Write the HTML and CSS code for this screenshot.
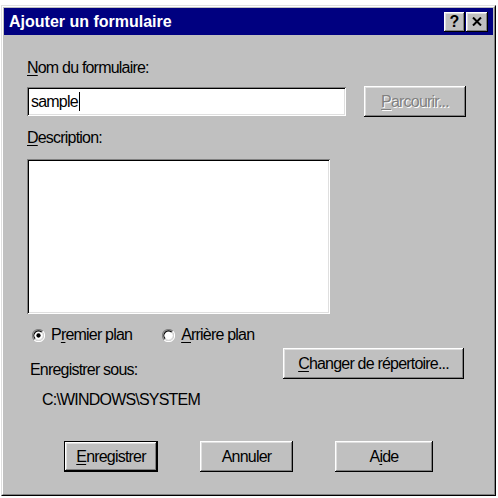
FILE: index.html
```html
<!DOCTYPE html>
<html lang="fr">
  <head>
    <meta charset="UTF-8" />
    <title>Ajouter un formulaire</title>
    <link rel="stylesheet" href="styles.css">
  </head>
  <body>
    <div class="window">
      <div class="frame">
        <!-- Title bar -->
        <div class="titlebar">
          <span class="title">Ajouter un formulaire</span>
          <div class="title-buttons">
            <span class="tbtn help">?</span>
            <span class="tbtn close">
              <svg width="10" height="9" viewBox="0 0 10 9">
                <path d="M1 0.5 L9 8.5 M9 0.5 L1 8.5" stroke="#000" stroke-width="2" fill="none" />
              </svg>
            </span>
          </div>
        </div>

        <div class="body">
          <div class="label first"><u>N</u>om du formulaire:</div>
          <div class="name-row">
            <div class="field name-field">sample<span class="caret"></span></div>
            <div class="btn browse disabled"><u>P</u>arcourir...</div>
          </div>

          <div class="label"><u>D</u>escription:</div>
          <div class="field memo"></div>

          <div class="lower">
            <div class="lower-left">
              <div class="radios">
                <div class="radio first-radio">
                  <svg class="radio-icon" width="13" height="13" viewBox="0 0 12 12">
                    <path d="M10 2 A5.5 5.5 0 0 0 2 10" stroke="#808080" stroke-width="1" fill="none" />
                    <path d="M2 10 A5.5 5.5 0 0 0 10 2" stroke="#fff" stroke-width="1" fill="none" />
                    <circle cx="6" cy="6" r="4.2" fill="#fff" />
                    <path d="M9 3 A4.2 4.2 0 0 0 3 9" stroke="#000" stroke-width="1" fill="none" />
                    <path d="M3 9 A4.2 4.2 0 0 0 9 3" stroke="#dfdfdf" stroke-width="1" fill="none" />
                    <circle cx="6" cy="6" r="2" fill="#000" />
                  </svg>
                  <span>P<u>r</u>emier plan</span>
                </div>
                <div class="radio">
                  <svg class="radio-icon" width="13" height="13" viewBox="0 0 12 12">
                    <path d="M10 2 A5.5 5.5 0 0 0 2 10" stroke="#808080" stroke-width="1" fill="none" />
                    <path d="M2 10 A5.5 5.5 0 0 0 10 2" stroke="#fff" stroke-width="1" fill="none" />
                    <circle cx="6" cy="6" r="4.2" fill="#fff" />
                    <path d="M9 3 A4.2 4.2 0 0 0 3 9" stroke="#000" stroke-width="1" fill="none" />
                    <path d="M3 9 A4.2 4.2 0 0 0 9 3" stroke="#dfdfdf" stroke-width="1" fill="none" />
                  </svg>
                  <span><u>A</u>rrière plan</span>
                </div>
              </div>
              <div class="save-label">Enregistrer sous:</div>
              <div class="path">C:\WINDOWS\SYSTEM</div>
            </div>
            <div class="btn change"><u>C</u>hanger de répertoire...</div>
          </div>

          <!-- Dialog buttons -->
          <div class="actions">
            <div class="btn default save"><u>E</u>nregistrer</div>
            <div class="btn cancel">Annuler</div>
            <div class="btn help-btn">A<u>i</u>de</div>
          </div>
        </div>
      </div>
    </div>
  </body>
</html>
```

FILE: styles.css
```css
/* Basic reset */
body,
html {
  margin: 0;
  padding: 0;
  background-color: #ffffff;
  font-family: "Liberation Sans", Arial, sans-serif;
  font-size: 16px;
  letter-spacing: -0.8px;
  color: #000;
}

u {
  text-decoration: underline;
  text-underline-offset: 2px;
}

/* Window frame (Win95 bevel) */
.window {
  margin: 5px 0 0 1px;
  width: 495px;
  height: 491px;
  box-sizing: border-box;
  border: 1px solid;
  border-color: #dfdfdf #000 #000 #dfdfdf;
}

.frame {
  height: 100%;
  box-sizing: border-box;
  border: 1px solid;
  border-color: #fff #808080 #808080 #fff;
  padding: 1px;
  background-color: #c0c0c0;
}

/* Title bar */
.titlebar {
  height: 27px;
  background-color: #000080;
  display: flex;
  align-items: center;
  justify-content: space-between;
  padding: 0 5px 0 5px;
}

.title {
  color: #fff;
  font-weight: bold;
  font-size: 16px;
  letter-spacing: 0;
}

.title-buttons {
  display: flex;
  gap: 1px;
}

.tbtn {
  width: 21px;
  height: 20px;
  box-sizing: border-box;
  background-color: #c0c0c0;
  box-shadow: inset -1px -1px #000, inset 1px 1px #fff, inset -2px -2px #808080, inset 2px 2px #dfdfdf;
  display: flex;
  align-items: center;
  justify-content: center;
  font-weight: bold;
  font-size: 16px;
  letter-spacing: 0;
  line-height: 1;
}

.tbtn.close {
  width: 22px;
}

/* Dialog body */
.body {
  padding-left: 23px;
}

.label {
  line-height: 18px;
  margin-top: 12px;
}

.label.first {
  margin-top: 24px;
}

.name-row {
  display: flex;
  align-items: center;
  margin-top: 9px;
}

/* Sunken fields */
.field {
  background-color: #fff;
  box-shadow: inset 1px 1px #808080, inset -1px -1px #fff, inset 2px 2px #000, inset -2px -2px #dfdfdf;
  box-sizing: border-box;
}

.name-field {
  width: 319px;
  height: 29px;
  padding-left: 4px;
  display: flex;
  align-items: center;
}

.caret {
  display: inline-block;
  width: 1px;
  height: 19px;
  background-color: #000;
  margin-left: 1px;
}

.memo {
  width: 303px;
  height: 155px;
  margin-top: 12px;
}

/* Buttons */
.btn {
  height: 31px;
  box-sizing: border-box;
  background-color: #c0c0c0;
  box-shadow: inset -1px -1px #000, inset 1px 1px #fff, inset -2px -2px #808080, inset 2px 2px #dfdfdf;
  display: flex;
  align-items: center;
  justify-content: center;
  white-space: nowrap;
}

.browse {
  width: 102px;
  margin-left: 18px;
}

.disabled {
  color: #808080;
  text-shadow: 1px 1px 0 #fff;
}

.lower {
  display: flex;
  margin-top: 12px;
}

.lower-left {
  width: 256px;
}

.radios {
  display: flex;
  height: 18px;
  align-items: center;
  white-space: nowrap;
}

.radio {
  display: flex;
  align-items: center;
  gap: 6px;
}

.first-radio {
  margin-left: 5px;
  margin-right: 30px;
}

.save-label {
  line-height: 18px;
  margin-top: 17px;
  padding-left: 3px;
}

.path {
  line-height: 18px;
  margin-top: 12px;
  padding-left: 15px;
}

.change {
  width: 181px;
  margin-top: 22px;
}

.actions {
  display: flex;
  justify-content: center;
  gap: 42px;
  margin-top: 32px;
  margin-left: -23px;
}

.default {
  box-shadow: inset 0 0 0 1px #000, inset -2px -2px #000, inset 2px 2px #fff, inset -3px -3px #808080, inset 3px 3px #dfdfdf;
}

.save {
  width: 94px;
}

.cancel {
  width: 93px;
}

.help-btn {
  width: 98px;
}
```
